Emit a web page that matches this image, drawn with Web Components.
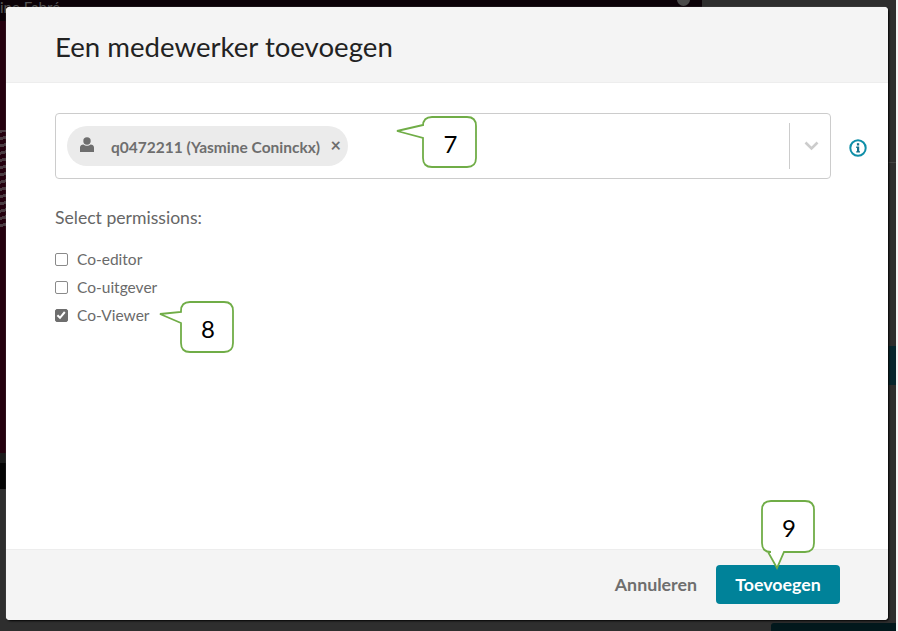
<!DOCTYPE html>
<html lang="nl">
<head>
<meta charset="utf-8">
<title>Een medewerker toevoegen</title>
<style>
    html, body { margin: 0; padding: 0; background: #2e2e2e; }
    body { font-family: Lato, "Liberation Sans", sans-serif; }
</style>
</head>
<body>
<app-screen>
    <dimmed-page slot="behind"></dimmed-page>

    <modal-dialog>
        <span slot="title">Een medewerker toevoegen</span>

        <div style="display:flex;align-items:center;gap:18px">
            <user-select style="flex:1">
                <user-chip>q0472211 (Yasmine Coninckx)</user-chip>
            </user-select>
            <info-icon></info-icon>
        </div>

        <permission-list label="Select permissions:">
            <perm-check>Co-editor</perm-check>
            <perm-check>Co-uitgever</perm-check>
            <perm-check checked>Co-Viewer</perm-check>
        </permission-list>

        <link-button slot="footer">Annuleren</link-button>
        <main-button slot="footer">Toevoegen</main-button>
    </modal-dialog>

    <call-out slot="notes" x="423" y="117" w="53" h="50" side="left" tip="-26,14" base="8,21">7</call-out>
    <call-out slot="notes" x="181" y="302" w="52" h="50" side="left" tip="-21,12" base="10,21">8</call-out>
    <call-out slot="notes" x="762" y="501" w="52" h="51" side="bottom" tip="15,16" base="6,22">9</call-out>
</app-screen>

<script>
    class AppScreen extends HTMLElement {
        constructor() {
            super();
            this.attachShadow({ mode: "open" });
            this.shadowRoot.innerHTML = `
                <style>
                    :host {
                        display: block;
                        position: relative;
                        width: 898px;
                        height: 631px;
                        overflow: hidden;
                        background: #2e2e2e;
                    }
                    .front {
                        position: relative;
                        padding: 7px 0 0 6px;
                    }
                </style>
                <slot name="behind"></slot>
                <div class="front"><slot></slot></div>
                <slot name="notes"></slot>
            `;
        }
    }

    // the page under the modal, only the edges of it are visible
    class DimmedPage extends HTMLElement {
        constructor() {
            super();
            this.attachShadow({ mode: "open" });
            this.shadowRoot.innerHTML = `
                <style>
                    :host {
                        position: absolute;
                        inset: 0;
                        display: block;
                        overflow: hidden;
                        color: #454545;
                        font: 15px/15px Lato, "Liberation Sans", sans-serif;
                    }
                    div { position: absolute; }
                    .top { left: 0; top: 0; width: 702px; height: 21px; background: #0c0208; }
                    .name { left: 0; top: 0; color: #555; }
                    .side { left: 0; top: 21px; width: 6px; height: 432px; background: #24000e; }
                    .rays {
                        left: 0; top: 130px; width: 6px; height: 100px;
                        background: repeating-linear-gradient(165deg, #4a3c42 0 3px, #24000e 3px 7px);
                    }
                    .strip1 { left: 0; top: 453px; width: 6px; height: 10px; background: #1b1b1b; }
                    .strip2 { left: 0; top: 463px; width: 6px; height: 26px; background: #050505; }
                    .teal { left: 888px; top: 346px; width: 8px; height: 39px; background: #07262e; }
                    .btn { left: 771px; top: 623px; width: 125px; height: 8px; background: #02181c; border-radius: 3px 0 0 0; }
                    .edge { left: 896px; top: 0; width: 2px; height: 631px; background: #f4f4f4; }
                    .round { left: 677px; top: -7px; width: 13px; height: 13px; border-radius: 50%; background: #4a4a4a; }
                    .rule { left: 888px; top: 162px; width: 8px; height: 1px; background: #444; }
                </style>
                <div class="top"></div>
                <div class="name">ine Fabré</div>
                <div class="round"></div>
                <div class="side"></div>
                <div class="rays"></div>
                <div class="strip1"></div>
                <div class="strip2"></div>
                <div class="teal"></div>
                <div class="btn"></div>
                <div class="rule"></div>
                <div class="edge"></div>
            `;
        }
    }

    class ModalDialog extends HTMLElement {
        constructor() {
            super();
            this.attachShadow({ mode: "open" });
            this.shadowRoot.innerHTML = `
                <style>
                    :host {
                        display: flex;
                        flex-direction: column;
                        width: 882px;
                        height: 613px;
                        background: #fff;
                        border-radius: 4px;
                        box-shadow: 1px 1px 2px #000, 0 0 1px #aaa;
                        overflow: hidden;
                        font-family: Lato, "Liberation Sans", sans-serif;
                    }
                    header {
                        height: 76px;
                        box-sizing: border-box;
                        display: flex;
                        align-items: center;
                        padding: 4px 49px 0;
                        background: #f4f4f4;
                        border-bottom: 1px solid #ededed;
                        font-size: 27.6px;
                        color: #222;
                    }
                    main {
                        flex: 1;
                        padding: 30px 21px 0 49px;
                    }
                    footer {
                        height: 71px;
                        box-sizing: border-box;
                        display: flex;
                        justify-content: flex-end;
                        align-items: flex-start;
                        gap: 19px;
                        padding: 15px 48px 0 0;
                        background: #f4f4f4;
                        border-top: 1px solid #ededed;
                    }
                </style>
                <header><slot name="title"></slot></header>
                <main><slot></slot></main>
                <footer><slot name="footer"></slot></footer>
            `;
        }
    }

    class UserSelect extends HTMLElement {
        constructor() {
            super();
            this.attachShadow({ mode: "open" });
            this.shadowRoot.innerHTML = `
                <style>
                    :host {
                        display: flex;
                        align-items: center;
                        height: 66px;
                        box-sizing: border-box;
                        background: #fff;
                        border: 1.5px solid #ccc;
                        border-radius: 4px;
                        padding: 0 11px 0 11px;
                    }
                    .values { flex: 1; display: flex; }
                    .sep { width: 1.5px; height: 46px; background: #ccc; }
                    svg { display: block; margin: 0 0 0 14px; }
                </style>
                <div class="values"><slot></slot></div>
                <div class="sep"></div>
                <svg width="15" height="10" viewBox="0 0 15 10" fill="none" stroke="#ccc" stroke-width="2.6">
                    <path d="M1.5 1.5 L7.5 7.5 L13.5 1.5"/>
                </svg>
            `;
        }
    }

    class UserChip extends HTMLElement {
        constructor() {
            super();
            this.attachShadow({ mode: "open" });
            this.shadowRoot.innerHTML = `
                <style>
                    :host {
                        display: flex;
                        align-items: center;
                        width: 281px;
                        height: 40px;
                        box-sizing: border-box;
                        padding: 0 7px 0 13px;
                        background: #ebebeb;
                        border-radius: 20px;
                        color: #6e6e6e;
                        font-size: 15.5px;
                        font-weight: 700;
                    }
                    svg { flex: none; display: block; margin: -3px 17px 0 0; }
                    .label { flex: 1; white-space: nowrap; margin-top: 2px; }
                    .close { font-size: 18px; margin-top: -3px; }
                </style>
                <svg width="14" height="15" viewBox="0 0 14 15" fill="#6e6e6e">
                    <circle cx="7" cy="4" r="3.7"/>
                    <path d="M0 15 V10.5 C0 8.6 1.6 7.4 3.4 7.4 C4.4 8.3 5.6 8.7 7 8.7 C8.4 8.7 9.6 8.3 10.6 7.4 C12.4 7.4 14 8.6 14 10.5 V15 Z"/>
                </svg>
                <span class="label"><slot></slot></span>
                <span class="close">×</span>
            `;
        }
    }

    class InfoIcon extends HTMLElement {
        constructor() {
            super();
            this.attachShadow({ mode: "open" });
            this.shadowRoot.innerHTML = `
                <style>
                    :host { display: block; width: 18px; height: 18px; margin-top: 4px; }
                    svg { display: block; }
                </style>
                <svg width="18" height="18" viewBox="0 0 18 18">
                    <circle cx="9" cy="9" r="7.7" fill="#fff" stroke="#0f8fa8" stroke-width="2"/>
                    <rect x="7.9" y="4.2" width="2.3" height="2.3" fill="#12708a"/>
                    <path d="M7.2 7.6 H10.2 V12.2 H11 V13.6 H7.2 V12.2 H8 V9 H7.2 Z" fill="#12708a"/>
                </svg>
            `;
        }
    }

    class PermissionList extends HTMLElement {
        constructor() {
            super();
            this.attachShadow({ mode: "open" });
            this.shadowRoot.innerHTML = `
                <style>
                    :host { display: block; margin-top: 28px; color: #666; }
                    .label { font-size: 17.6px; line-height: 22px; margin-bottom: 20px; }
                    .rows { display: flex; flex-direction: column; gap: 8px; }
                </style>
                <div class="label"></div>
                <div class="rows"><slot></slot></div>
            `;
            this.shadowRoot.querySelector(".label").innerText = this.getAttribute("label");
        }
    }

    class PermCheck extends HTMLElement {
        constructor() {
            super();
            this.attachShadow({ mode: "open" });
            this.shadowRoot.innerHTML = `
                <style>
                    :host {
                        display: flex;
                        align-items: center;
                        gap: 9px;
                        height: 20px;
                        color: #6a6a6a;
                        font-size: 15.5px;
                    }
                    .box {
                        width: 13px;
                        height: 13px;
                        box-sizing: border-box;
                        border: 1.5px solid #8a8a8a;
                        border-radius: 2px;
                        background: #fff;
                        display: flex;
                    }
                    :host([checked]) .box { background: #6e6e6e; border-color: #6e6e6e; }
                    svg { display: none; }
                    :host([checked]) svg { display: block; margin: -1px; }
                </style>
                <div class="box">
                    <svg width="12" height="12" viewBox="0 0 12 12" fill="none" stroke="#fff" stroke-width="2">
                        <path d="M2.4 6.2 L5 8.8 L9.8 3"/>
                    </svg>
                </div>
                <span><slot></slot></span>
            `;
        }
    }

    class LinkButton extends HTMLElement {
        constructor() {
            super();
            this.attachShadow({ mode: "open" });
            this.shadowRoot.innerHTML = `
                <style>
                    :host {
                        display: block;
                        line-height: 39px;
                        color: #6e6e6e;
                        font-size: 17.8px;
                        font-weight: 700;
                    }
                </style>
                <slot></slot>
            `;
        }
    }

    class MainButton extends HTMLElement {
        constructor() {
            super();
            this.attachShadow({ mode: "open" });
            this.shadowRoot.innerHTML = `
                <style>
                    :host {
                        display: block;
                        width: 124px;
                        height: 39px;
                        text-align: center;
                        line-height: 39px;
                        background: #008299;
                        border-radius: 4px;
                        color: #fff;
                        font-size: 17.8px;
                        font-weight: 700;
                    }
                </style>
                <slot></slot>
            `;
        }
    }

    // numbered speech bubble laid over the screenshot
    class CallOut extends HTMLElement {
        constructor() {
            super();
            this.attachShadow({ mode: "open" });
        }

        connectedCallback() {
            this.render();
        }

        path(w, h, side, tip, base) {
            const r = 9;
            const top = `M${r} 0 H${w - r} Q${w} 0 ${w} ${r}`;
            if (side === "left") {
                return `${top} V${h - r} Q${w} ${h} ${w - r} ${h} H${r} Q0 ${h} 0 ${h - r}
                    V${base[1]} L${tip[0]} ${tip[1]} L0 ${base[0]} V${r} Q0 0 ${r} 0 Z`;
            }
            return `${top} V${h - r} Q${w} ${h} ${w - r} ${h} H${base[1]} L${tip[0]} ${h + tip[1]}
                L${base[0]} ${h} H${r} Q0 ${h} 0 ${h - r} V${r} Q0 0 ${r} 0 Z`;
        }

        render() {
            const w = +this.getAttribute("w");
            const h = +this.getAttribute("h");
            const tip = this.getAttribute("tip").split(",").map(Number);
            const base = this.getAttribute("base").split(",").map(Number);
            const d = this.path(w, h, this.getAttribute("side"), tip, base);
            this.shadowRoot.innerHTML = `
                <style>
                    :host {
                        position: absolute;
                        left: ${this.getAttribute("x")}px;
                        top: ${this.getAttribute("y")}px;
                        width: ${w}px;
                        height: ${h}px;
                        display: flex;
                        align-items: center;
                        justify-content: center;
                        color: #000;
                        font: 24px Lato, "Liberation Sans", sans-serif;
                    }
                    svg { position: absolute; inset: 0; overflow: visible; }
                    span { position: relative; left: 1px; top: 1px; }
                </style>
                <svg width="${w}" height="${h}" viewBox="0 0 ${w} ${h}">
                    <path d="${d}" fill="#fff" stroke="#70ad47" stroke-width="1.8"/>
                </svg>
                <span><slot></slot></span>
            `;
        }
    }

    customElements.define("app-screen", AppScreen);
    customElements.define("dimmed-page", DimmedPage);
    customElements.define("modal-dialog", ModalDialog);
    customElements.define("user-select", UserSelect);
    customElements.define("user-chip", UserChip);
    customElements.define("info-icon", InfoIcon);
    customElements.define("permission-list", PermissionList);
    customElements.define("perm-check", PermCheck);
    customElements.define("link-button", LinkButton);
    customElements.define("main-button", MainButton);
    customElements.define("call-out", CallOut);
</script>
</body>
</html>
